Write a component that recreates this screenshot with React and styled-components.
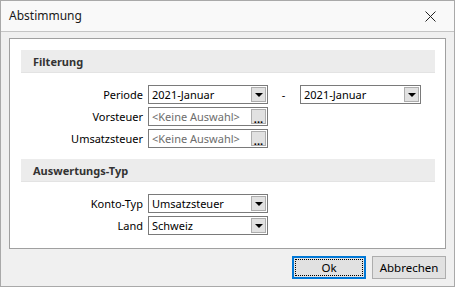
import styled, { createGlobalStyle } from "styled-components";

const GlobalStyle = createGlobalStyle`
	html, body {
		margin: 0;
		padding: 0;
		background: #ffffff;
	}
	body {
		font-family: "Noto Sans", "Open Sans", sans-serif;
		font-size: 11px;
		color: #000000;
	}
`;

const Window = styled.div`
	width: 455px;
	height: 287px;
	box-sizing: border-box;
	border: 1px solid #a9a9a9;
	background: #f0f0f0;
	display: flex;
	flex-direction: column;
`;

const TitleBar = styled.div`
	height: 30px;
	flex: none;
	background: #f9f9f9;
	border-bottom: 1px solid #c4c4c4;
	display: flex;
	align-items: center;
	justify-content: space-between;
	padding-left: 8px;
`;

const Title = styled.span`
	font-size: 12px;
	color: #1a1a1a;
	margin-top: -1px;
`;

const CloseButton = styled.div`
	width: 44px;
	height: 30px;
	display: flex;
	align-items: center;
	justify-content: center;
	margin-right: 2px;
`;

const Body = styled.div`
	flex: 1;
	display: flex;
	flex-direction: column;
	padding: 6px 8px 7px 8px;
	gap: 7px;
`;

const Panel = styled.div`
	flex: 1;
	background: #ffffff;
	border: 1px solid #a0a0a0;
	padding: 11px 10px 0 11px;
	display: flex;
	flex-direction: column;
`;

const SectionHeader = styled.div`
	height: 23px;
	background: #ececec;
	border-bottom: 1px solid #e3e3e3;
	box-sizing: border-box;
	display: flex;
	align-items: center;
	padding-left: 12px;
	font-weight: 700;
	font-size: 11px;
	color: #333333;
`;

const Rows = styled.div`
	display: grid;
	grid-template-columns: 127px 120px 32px 121px;
	row-gap: 3px;
	margin: 12px 0 11px 0;
	align-items: center;
`;

const Label = styled.div`
	text-align: right;
	padding-right: 5px;
	white-space: nowrap;
`;

const Field = styled.div`
	height: 19px;
	box-sizing: border-box;
	border: 1px solid #7a7a7a;
	background: #ffffff;
	display: flex;
	align-items: center;
	padding-left: 3px;
`;

const FieldText = styled.span`
	flex: 1;
	white-space: nowrap;
	overflow: hidden;
	color: ${({ $muted }) => ($muted ? "#6d6d6d" : "#000000")};
`;

const FieldButton = styled.div`
	width: 15px;
	height: 15px;
	box-sizing: border-box;
	margin-right: 1px;
	background: #e1e1e1;
	border: 1px solid #adadad;
	display: flex;
	align-items: ${({ $dots }) => ($dots ? "flex-end" : "center")};
	justify-content: center;
	font-weight: 700;
	font-size: 11px;
	line-height: 9px;
	color: #000;
`;

const Arrow = styled.div`
	width: 0;
	height: 0;
	border-left: 4px solid transparent;
	border-right: 4px solid transparent;
	border-top: 4px solid #000000;
	margin-top: 1px;
`;

const Dash = styled.div`
	text-align: center;
	padding-right: 1px;
`;

const Footer = styled.div`
	display: flex;
	justify-content: flex-end;
	gap: 6px;
`;

const Button = styled.div`
	width: 74px;
	height: 23px;
	box-sizing: border-box;
	background: #e1e1e1;
	border: ${({ $primary }) => ($primary ? "2px solid #0078d7" : "1px solid #adadad")};
	display: flex;
	align-items: center;
	justify-content: center;
	font-size: 11.5px;
	color: #000;
	padding: ${({ $primary }) => ($primary ? "1px" : "0")};
`;

const Focus = styled.div`
	flex: 1;
	align-self: stretch;
	border: 1px dotted #000000;
	display: flex;
	align-items: center;
	justify-content: center;
`;

const Combo = ({ value }) => (
	<Field>
		<FieldText>{value}</FieldText>
		<FieldButton>
			<Arrow />
		</FieldButton>
	</Field>
);

const Picker = () => (
	<Field>
		<FieldText $muted>&lt;Keine Auswahl&gt;</FieldText>
		<FieldButton $dots>...</FieldButton>
	</Field>
);

export default function App() {
	return (
		<>
			<GlobalStyle />
			<Window>
				<TitleBar>
					<Title>Abstimmung</Title>
					<CloseButton>
						<svg width="11" height="11" viewBox="0 0 11 11">
							<path d="M0.5 0.5 L10.5 10.5 M10.5 0.5 L0.5 10.5" stroke="#222" strokeWidth="1" />
						</svg>
					</CloseButton>
				</TitleBar>
				<Body>
					<Panel>
						<SectionHeader>Filterung</SectionHeader>
						<Rows>
							<Label>Periode</Label>
							<Combo value="2021-Januar" />
							<Dash>-</Dash>
							<Combo value="2021-Januar" />
							<Label>Vorsteuer</Label>
							<Picker />
							<div />
							<div />
							<Label>Umsatzsteuer</Label>
							<Picker />
							<div />
							<div />
						</Rows>
						<SectionHeader>Auswertungs-Typ</SectionHeader>
						<Rows>
							<Label>Konto-Typ</Label>
							<Combo value="Umsatzsteuer" />
							<div />
							<div />
							<Label>Land</Label>
							<Combo value="Schweiz" />
							<div />
							<div />
						</Rows>
					</Panel>
					<Footer>
						<Button $primary>
							<Focus>Ok</Focus>
						</Button>
						<Button>Abbrechen</Button>
					</Footer>
				</Body>
			</Window>
		</>
	);
}
